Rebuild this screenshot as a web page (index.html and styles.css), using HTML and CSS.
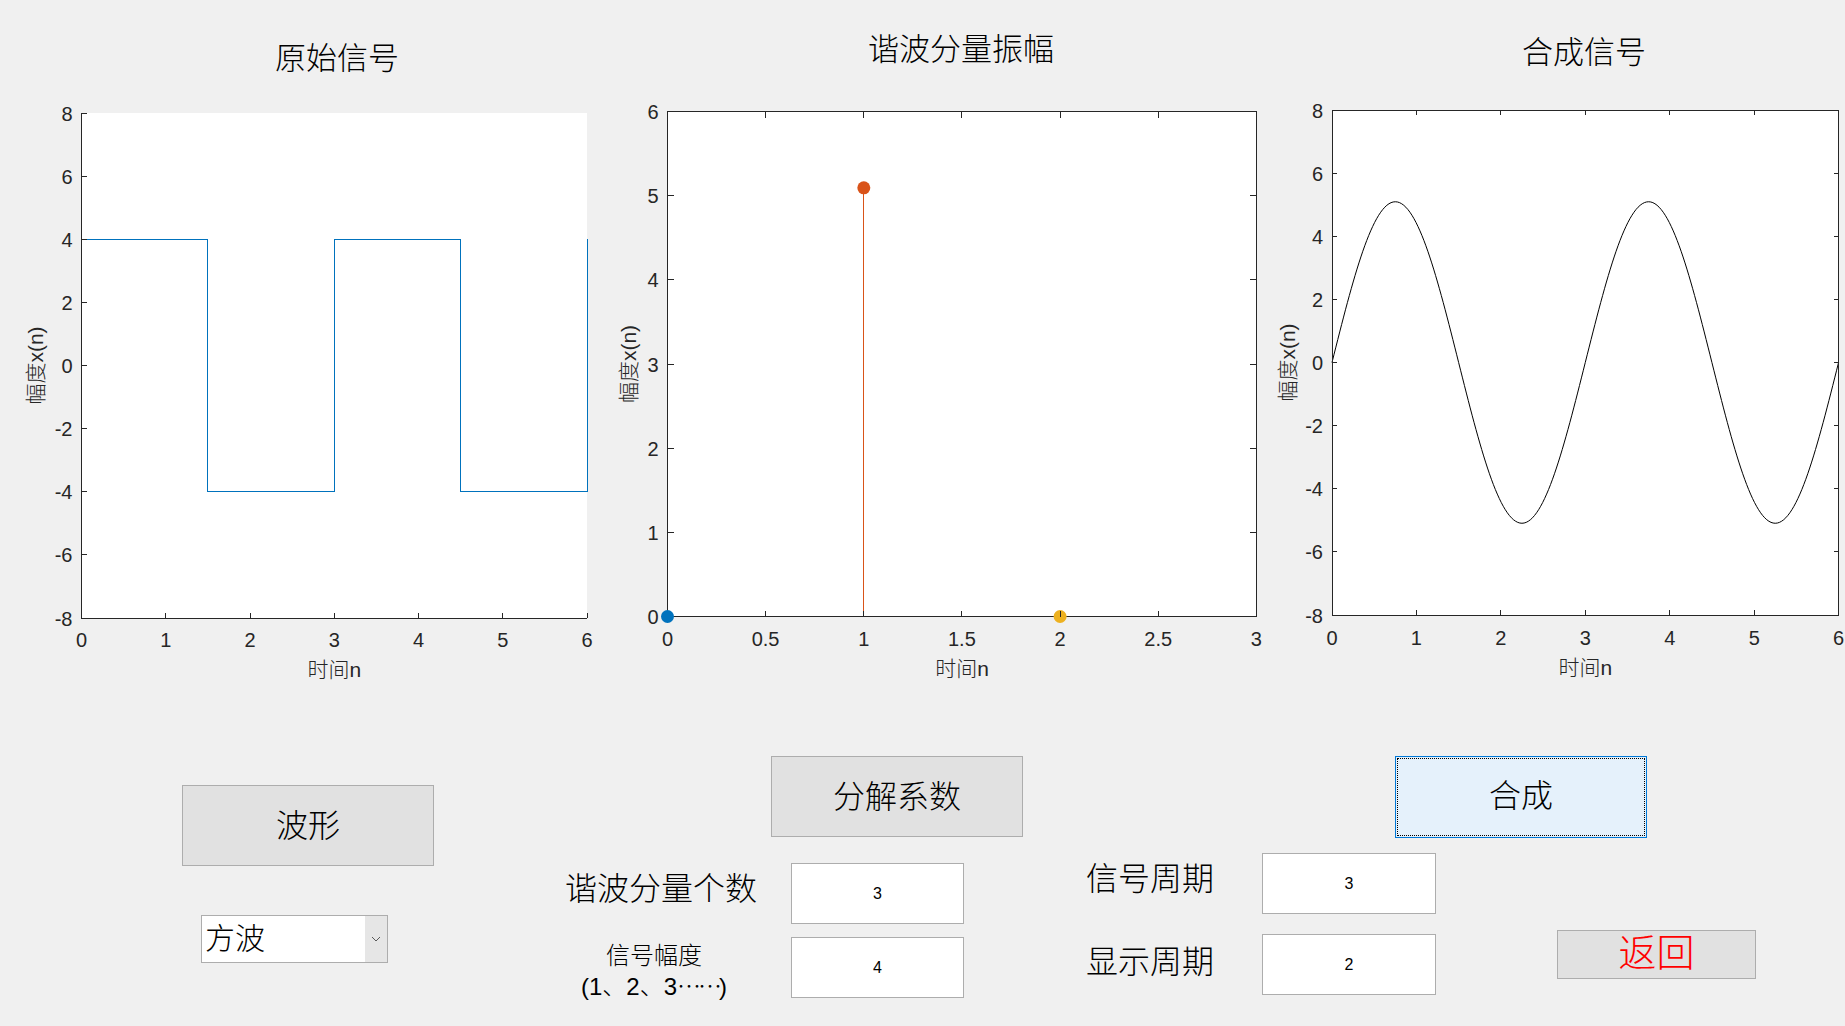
FILE: index.html
```html
<!DOCTYPE html>
<html lang="zh-CN">
<head>
    <meta charset="UTF-8">
    <title>傅里叶级数合成</title>
    <link rel="stylesheet" href="styles.css">
</head>
<body>
<div class="figure">

    <div class="charts">
        <!-- 原始信号 -->
        <svg class="chart" width="612" height="700" viewBox="0 0 612 700">
            <text class="title" x="337" y="69">原始信号</text>
            <rect class="plot-bg" x="81.5" y="113" width="505.5" height="505"/>
            <path class="square" d="M81.5 239.25H207.9V491.75H334.25V239.25H460.6V491.75H587V239.25"/>
            <path class="axis" d="M81.5 113V618H587"/>
            <path class="axis" d="M81.5 113h5M81.5 176.1h5M81.5 239.25h5M81.5 302.4h5M81.5 365.5h5M81.5 428.6h5M81.5 491.75h5M81.5 554.9h5M165.75 618v-5M250 618v-5M334.25 618v-5M418.5 618v-5M502.75 618v-5M587 618v-5"/>
            <text class="tick tick-y" x="72.5" y="120.5">8</text>
            <text class="tick tick-y" x="72.5" y="183.6">6</text>
            <text class="tick tick-y" x="72.5" y="246.75">4</text>
            <text class="tick tick-y" x="72.5" y="309.9">2</text>
            <text class="tick tick-y" x="72.5" y="373">0</text>
            <text class="tick tick-y" x="72.5" y="436.1">-2</text>
            <text class="tick tick-y" x="72.5" y="499.25">-4</text>
            <text class="tick tick-y" x="72.5" y="562.4">-6</text>
            <text class="tick tick-y" x="72.5" y="625.5">-8</text>
            <text class="tick tick-x" x="81.5" y="647">0</text>
            <text class="tick tick-x" x="165.75" y="647">1</text>
            <text class="tick tick-x" x="250" y="647">2</text>
            <text class="tick tick-x" x="334.25" y="647">3</text>
            <text class="tick tick-x" x="418.5" y="647">4</text>
            <text class="tick tick-x" x="502.75" y="647">5</text>
            <text class="tick tick-x" x="587" y="647">6</text>
            <text class="axis-label" x="334.25" y="677">时间n</text>
            <text class="axis-label" transform="translate(35 365.5) rotate(-90)" y="8">幅度x(n)</text>
        </svg>

        <!-- 谐波分量振幅 -->
        <svg class="chart" width="660" height="700" viewBox="612 0 660 700">
            <text class="title" x="961" y="60">谐波分量振幅</text>
            <rect class="plot-bg" x="667.5" y="111.5" width="588.8" height="505"/>
            <line class="stem" x1="863.8" y1="616.5" x2="863.8" y2="187.8"/>
            <rect class="axis" x="667.5" y="111.5" width="588.8" height="505"/>
            <circle class="dot-blue" cx="667.5" cy="616.5" r="6.5"/>
            <circle class="dot-red" cx="863.8" cy="187.8" r="6.5"/>
            <circle class="dot-yellow" cx="1060.1" cy="616.5" r="6.5"/>
            <path class="axis" d="M765.6 616.5v-6M863.8 616.5v-6M961.9 616.5v-6M1060.1 616.5v-6M1158.2 616.5v-6M765.6 111.5v6M863.8 111.5v6M961.9 111.5v6M1060.1 111.5v6M1158.2 111.5v6M667.5 532.3h6M667.5 448.2h6M667.5 364h6M667.5 279.8h6M667.5 195.7h6M1256.3 532.3h-6M1256.3 448.2h-6M1256.3 364h-6M1256.3 279.8h-6M1256.3 195.7h-6"/>
            <text class="tick tick-y" x="658.5" y="119">6</text>
            <text class="tick tick-y" x="658.5" y="203.2">5</text>
            <text class="tick tick-y" x="658.5" y="287.3">4</text>
            <text class="tick tick-y" x="658.5" y="371.5">3</text>
            <text class="tick tick-y" x="658.5" y="455.7">2</text>
            <text class="tick tick-y" x="658.5" y="539.8">1</text>
            <text class="tick tick-y" x="658.5" y="624">0</text>
            <text class="tick tick-x" x="667.5" y="646">0</text>
            <text class="tick tick-x" x="765.6" y="646">0.5</text>
            <text class="tick tick-x" x="863.8" y="646">1</text>
            <text class="tick tick-x" x="961.9" y="646">1.5</text>
            <text class="tick tick-x" x="1060.1" y="646">2</text>
            <text class="tick tick-x" x="1158.2" y="646">2.5</text>
            <text class="tick tick-x" x="1256.3" y="646">3</text>
            <text class="axis-label" x="962" y="676">时间n</text>
            <text class="axis-label" transform="translate(628 364) rotate(-90)" y="8">幅度x(n)</text>
        </svg>

        <!-- 合成信号 -->
        <svg class="chart" width="573" height="700" viewBox="1272 0 573 700">
            <text class="title" x="1584" y="63">合成信号</text>
            <rect class="plot-bg" x="1332" y="110" width="506.6" height="505"/>
            <path class="sine" d="M1332 362.5c20.65 -82.35 40.40 -160.75 63.32 -160.75c22.92 0 42.67 78.40 63.32 160.75c20.65 82.35 40.40 160.75 63.32 160.75c22.92 0 42.67 -78.40 63.32 -160.75c20.65 -82.35 40.40 -160.75 63.32 -160.75c22.92 0 42.67 78.40 63.32 160.75c20.65 82.35 40.40 160.75 63.32 160.75c22.92 0 42.67 -78.40 63.32 -160.75"/>
            <rect class="axis" x="1332" y="110" width="506.6" height="505"/>
            <path class="axis" d="M1416.4 615v-5M1500.9 615v-5M1585.3 615v-5M1669.7 615v-5M1754.2 615v-5M1416.4 110v5M1500.9 110v5M1585.3 110v5M1669.7 110v5M1754.2 110v5M1332 173.1h5M1332 236.25h5M1332 299.4h5M1332 362.5h5M1332 425.6h5M1332 488.75h5M1332 551.9h5M1838.6 173.1h-5M1838.6 236.25h-5M1838.6 299.4h-5M1838.6 362.5h-5M1838.6 425.6h-5M1838.6 488.75h-5M1838.6 551.9h-5"/>
            <text class="tick tick-y" x="1323" y="117.5">8</text>
            <text class="tick tick-y" x="1323" y="180.6">6</text>
            <text class="tick tick-y" x="1323" y="243.75">4</text>
            <text class="tick tick-y" x="1323" y="306.9">2</text>
            <text class="tick tick-y" x="1323" y="370">0</text>
            <text class="tick tick-y" x="1323" y="433.1">-2</text>
            <text class="tick tick-y" x="1323" y="496.25">-4</text>
            <text class="tick tick-y" x="1323" y="559.4">-6</text>
            <text class="tick tick-y" x="1323" y="622.5">-8</text>
            <text class="tick tick-x" x="1332" y="645">0</text>
            <text class="tick tick-x" x="1416.4" y="645">1</text>
            <text class="tick tick-x" x="1500.9" y="645">2</text>
            <text class="tick tick-x" x="1585.3" y="645">3</text>
            <text class="tick tick-x" x="1669.7" y="645">4</text>
            <text class="tick tick-x" x="1754.2" y="645">5</text>
            <text class="tick tick-x" x="1838.6" y="645">6</text>
            <text class="axis-label" x="1585.3" y="675">时间n</text>
            <text class="axis-label" transform="translate(1287 362.5) rotate(-90)" y="8">幅度x(n)</text>
        </svg>
    </div>

    <div class="controls">
        <div class="group group-wave">
            <button class="btn btn-wave" type="button">波形</button>
            <div class="select">
                <span class="select-text">方波</span>
                <span class="select-arrow">
                    <svg width="10" height="6" viewBox="0 0 10 6"><polyline points="1,1 5,5 9,1" fill="none" stroke="#5a5a5a" stroke-width="1"/></svg>
                </span>
            </div>
        </div>

        <div class="group group-coef">
            <button class="btn btn-coef" type="button">分解系数</button>
            <div class="field field-count">
                <label class="field-label label-count" for="count">谐波分量个数</label>
                <input class="field-input input-count" id="count" type="text" value="3">
            </div>
            <div class="field field-amp">
                <label class="field-label label-amp" for="amp">信号幅度<br>(1、2、3<span class="dots">……</span>)</label>
                <input class="field-input input-amp" id="amp" type="text" value="4">
            </div>
        </div>

        <div class="group group-synth">
            <button class="btn btn-synth" type="button">合成</button>
            <div class="field field-period">
                <label class="field-label label-period" for="period">信号周期</label>
                <input class="field-input input-period" id="period" type="text" value="3">
            </div>
            <div class="field field-show">
                <label class="field-label label-show" for="show">显示周期</label>
                <input class="field-input input-period" id="show" type="text" value="2">
                <button class="btn btn-back" type="button">返回</button>
            </div>
        </div>
    </div>

</div>
</body>
</html>
```

FILE: styles.css
```css
body {
    margin: 0;
    background-color: #f0f0f0;
    font-family: "Liberation Sans", "Noto Sans CJK SC", sans-serif;
    color: #000;
}
.figure {
    width: 1845px;
    height: 1026px;
    overflow: hidden;
}

/* plots */
.charts {
    display: flex;
    height: 700px;
}
.chart {
    display: block;
    flex: none;
}
.title {
    font-size: 31px;
    font-weight: 300;
    fill: #000;
    text-anchor: middle;
}
.plot-bg {
    fill: #fff;
}
.axis {
    fill: none;
    stroke: #262626;
    stroke-width: 1;
    shape-rendering: crispEdges;
}
.tick {
    font-size: 20px;
    fill: #262626;
}
.tick-y {
    text-anchor: end;
}
.tick-x {
    text-anchor: middle;
}
.axis-label {
    font-size: 21px;
    font-weight: 300;
    fill: #262626;
    text-anchor: middle;
}
.square {
    fill: none;
    stroke: #0072bd;
    stroke-width: 1;
    shape-rendering: crispEdges;
}
.sine {
    fill: none;
    stroke: #000;
    stroke-width: 1;
}
.stem {
    stroke: #d95319;
    stroke-width: 1;
    shape-rendering: crispEdges;
}
.dot-blue {
    fill: #0072bd;
}
.dot-red {
    fill: #d95319;
}
.dot-yellow {
    fill: #edb120;
}

/* controls */
.controls {
    display: flex;
    align-items: flex-start;
    height: 326px;
}
.group {
    display: flex;
    flex-direction: column;
    align-items: flex-start;
    flex: none;
}
.group-wave {
    margin-left: 182px;
}
.group-coef {
    margin-left: 131px;
}
.group-synth {
    margin-left: 63px;
}
.btn {
    box-sizing: border-box;
    width: 252px;
    height: 81px;
    padding: 0;
    background-color: #e1e1e1;
    border: 1px solid #adadad;
    font-family: inherit;
    font-size: 32px;
    font-weight: 300;
    line-height: 1;
    color: #000;
}
.btn-wave {
    margin-top: 85px;
}
.btn-coef {
    margin-top: 56px;
    margin-left: 206px;
}
.btn-synth {
    height: 82px;
    margin-top: 56px;
    margin-left: 309px;
    padding-bottom: 2px;
    background-color: #e5f1fb;
    border-color: #0078d7;
    outline: 1px dotted #000;
    outline-offset: -3px;
}
.btn-back {
    width: 199px;
    height: 49px;
    margin-left: 121px;
    margin-top: -4px;
    padding-bottom: 3px;
    align-self: flex-start;
    font-size: 38px;
    line-height: 30px;
    color: #ff0000;
}

.select {
    box-sizing: border-box;
    display: flex;
    width: 187px;
    height: 48px;
    margin-top: 49px;
    margin-left: 19px;
    background: #fff;
    border: 1px solid #adadad;
}
.select-text {
    flex: 1;
    padding-left: 3px;
    font-size: 30px;
    font-weight: 300;
    line-height: 46px;
}
.select-arrow {
    width: 22px;
    display: flex;
    align-items: center;
    justify-content: center;
    background: #e6e6e6;
}

.field {
    display: flex;
    align-items: center;
}
.field-label {
    font-weight: 300;
}
.field-input {
    box-sizing: border-box;
    width: 173px;
    height: 61px;
    padding: 0;
    border: 1px solid #adadad;
    background: #fff;
    font-family: "Liberation Sans", sans-serif;
    font-size: 16px;
    color: #000;
    text-align: center;
}
.field-count {
    margin-top: 26px;
}
.label-count {
    width: 192px;
    font-size: 32px;
    line-height: 1;
    text-align: center;
    margin-bottom: 9px;
}
.input-count {
    margin-left: 34px;
}
.field-amp {
    margin-top: 13px;
    align-items: flex-start;
}
.label-amp {
    width: 178px;
    font-size: 24px;
    line-height: 29px;
    text-align: center;
    margin-top: 4px;
}
.dots {
    font-family: "Noto Sans CJK SC", sans-serif;
    letter-spacing: -3px;
}
.input-amp {
    margin-left: 48px;
}
.field-period {
    margin-top: 15px;
}
.label-period {
    font-size: 32px;
    line-height: 1;
    margin-bottom: 9px;
}
.field-show {
    margin-top: 20px;
}
.label-show {
    font-size: 32px;
    line-height: 1;
    margin-bottom: 5px;
}
.input-period {
    width: 174px;
    margin-left: 48px;
}
```
